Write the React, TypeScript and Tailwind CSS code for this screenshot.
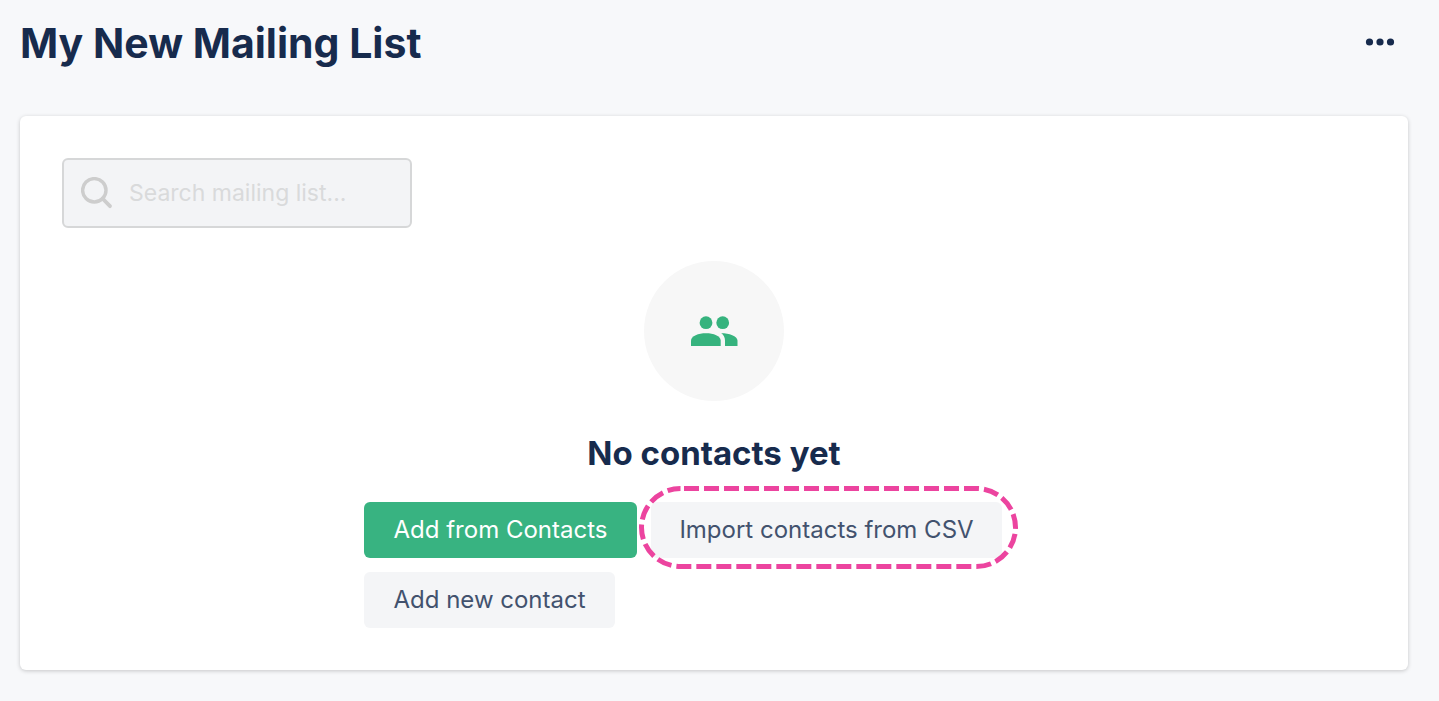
import React from 'react';

const MoreIcon: React.FC = () => (
  <svg width="30" height="8" viewBox="0 0 30 8" fill="currentColor" aria-hidden="true">
    <circle cx="4.5" cy="4" r="3.6" />
    <circle cx="15" cy="4" r="3.6" />
    <circle cx="25.5" cy="4" r="3.6" />
  </svg>
);

const SearchIcon: React.FC = () => (
  <svg width="32" height="32" viewBox="0 0 32 32" fill="none" stroke="currentColor" aria-hidden="true">
    <circle cx="13.3" cy="13.3" r="11.7" strokeWidth="3.4" />
    <path d="M21.500 21.500l7.500 7.700" strokeWidth="3.8" strokeLinecap="round" />
  </svg>
);

const PeopleIcon: React.FC = () => (
  <svg width="47" height="30" viewBox="0 0 47 30" fill="currentColor" aria-hidden="true">
    <circle cx="15" cy="6.7" r="6.4" />
    <circle cx="31.700" cy="6.7" r="6.4" />
    <path d="M0 30v-5.500C0 19.800 7.500 17.200 15 17.200s14.700 2.600 14.700 7.300V30z" />
    <path d="M30.200 17.200C38 17.200 46.500 19.800 46.500 24.500V30H34v-5.500c0-3.200-1.500-5.700-3.800-7.300z" />
  </svg>
);

const Highlight: React.FC = () => (
  <svg className="pointer-events-none absolute -left-3 -top-4 h-[83px] w-[379px]" viewBox="0 0 379 83" fill="none" aria-hidden="true">
    <rect x="2.5" y="2.5" width="374" height="78" rx="39" stroke="#ec449f" strokeWidth="5" strokeDasharray="15 5" strokeDashoffset="-3.500" />
  </svg>
);

const App: React.FC = () => {
  return (
    <main className="min-h-screen bg-[#f7f8fa] pb-8 pl-5 pr-[31px] pt-[15px] font-['Inter',sans-serif] text-[#172b4d]">
      <header className="mb-[45px] flex h-14 items-center justify-between pr-[13px]">
        <h1 className="text-[41px] font-bold leading-[56px]">My New Mailing List</h1>
        <button type="button" aria-label="More options" className="-mt-0.5 cursor-pointer">
          <MoreIcon />
        </button>
      </header>

      <section className="rounded-md bg-white px-[42px] py-[42px] shadow-[0_1px_4px_rgba(0,0,0,0.2)]">
        <label className="flex h-[70px] w-full max-w-[350px] items-center gap-4 rounded-md border-2 border-[#d6d7d8] bg-[#f3f4f6] px-[17px] text-[#cdcdcd]">
          <SearchIcon />
          <input
            type="search"
            aria-label="Search mailing list"
            placeholder="Search mailing list..."
            className="min-w-0 flex-1 bg-transparent text-[23px] text-[#172b4d] outline-none placeholder:text-[#d9dadb]"
          />
        </label>

        <div className="mx-auto mt-[33px] flex max-w-[700px] flex-col items-center">
          <div className="flex size-[140px] items-center justify-center rounded-full bg-[#f7f7f7] text-[#36b37e]">
            <PeopleIcon />
          </div>
          <h2 className="mt-7 text-[33px] font-bold leading-[48px]">No contacts yet</h2>
          <div className="mt-[25px] flex w-full flex-wrap gap-[14px] text-2xl">
            <button type="button" className="h-14 w-[273px] cursor-pointer rounded-md bg-[#38b381] text-white">
              Add from Contacts
            </button>
            <div className="relative">
              <button type="button" className="h-14 w-[351px] cursor-pointer rounded-md bg-[#f4f5f7] text-[#42526e]">
                Import contacts from CSV
              </button>
              <Highlight />
            </div>
            <button type="button" className="h-14 w-[251px] cursor-pointer rounded-md bg-[#f4f5f7] text-[#42526e]">
              Add new contact
            </button>
          </div>
        </div>
      </section>
    </main>
  );
};

export default App;
